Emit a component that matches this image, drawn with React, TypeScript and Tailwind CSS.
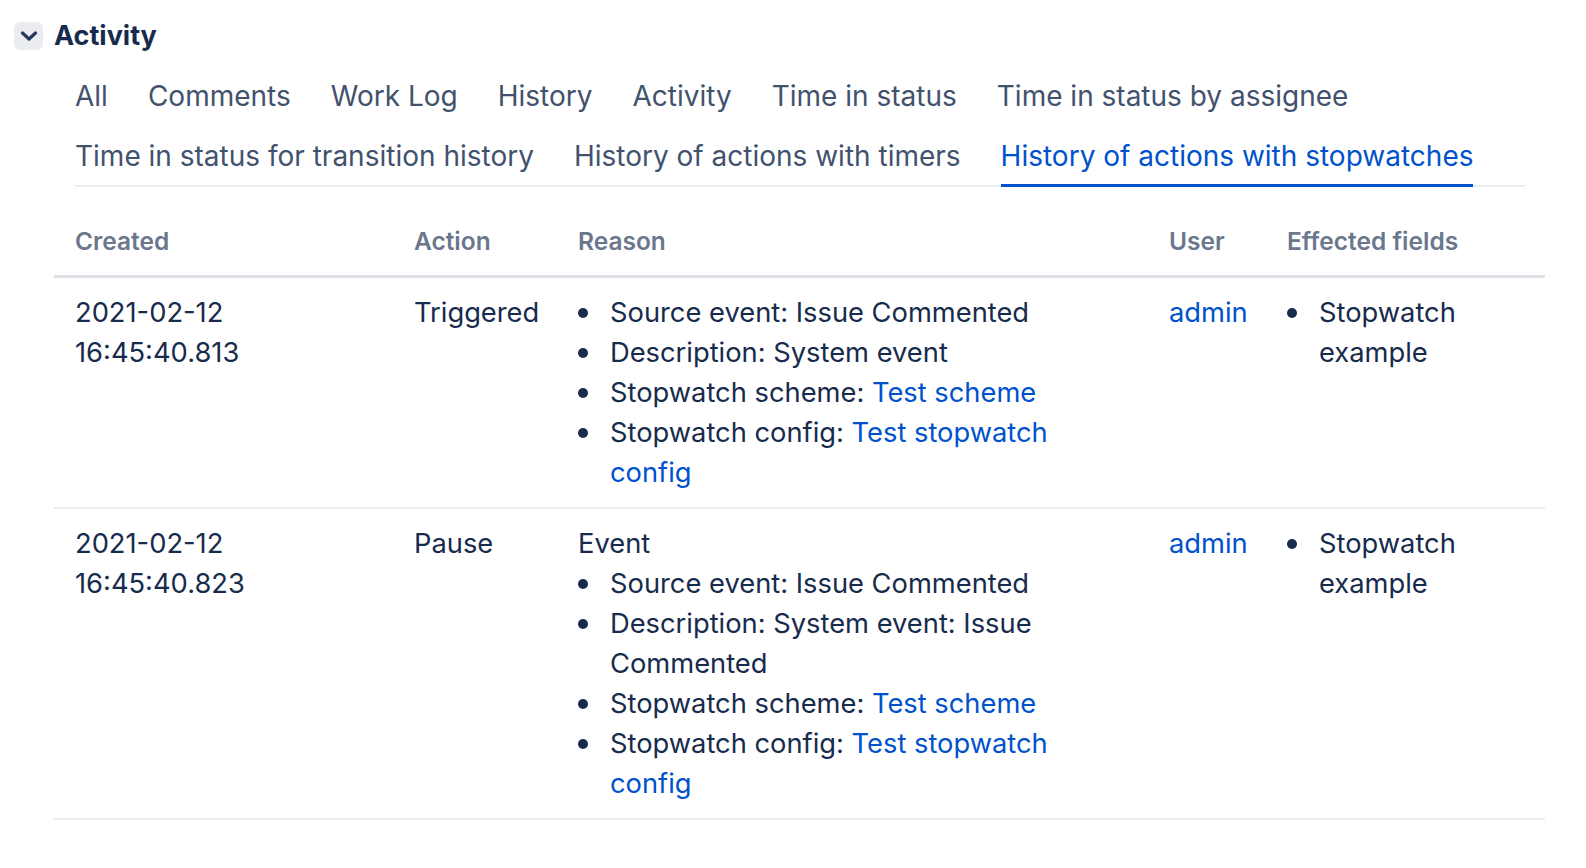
import { ReactNode } from "react"

const TABS = [
  "All",
  "Comments",
  "Work Log",
  "History",
  "Activity",
  "Time in status",
  "Time in status by assignee",
  "Time in status for transition history",
  "History of actions with timers",
  "History of actions with stopwatches",
]

const ACTIVE_TAB = "History of actions with stopwatches"

function Link({ children }: { children: ReactNode }) {
  return <span className="text-[#0052cc]">{children}</span>
}

function Bullets({ items }: { items: ReactNode[] }) {
  return (
    <ul>
      {items.map((item, i) => (
        <li key={i} className="flex">
          <span className="flex h-[40px] w-[32px] shrink-0 items-center">
            <span className="h-[10px] w-[10px] rounded-full bg-[#172b4d]" />
          </span>
          <span>{item}</span>
        </li>
      ))}
    </ul>
  )
}

function Chevron() {
  return (
    <svg width="20" height="20" viewBox="0 0 20 20" fill="none">
      <path
        d="M3.5 7l6.5 6 6.5-6"
        stroke="#253858"
        strokeWidth="3.2"
        strokeLinecap="round"
        strokeLinejoin="round"
      />
    </svg>
  )
}

const configLine = (
  <>
    Stopwatch config: <Link>Test stopwatch</Link> <Link>config</Link>
  </>
)

const schemeLine = (
  <>
    Stopwatch scheme: <Link>Test scheme</Link>
  </>
)

const ROWS = [
  {
    created: ["2021-02-12", "16:45:40.813"],
    action: "Triggered",
    lead: null as string | null,
    reason: ["Source event: Issue Commented", "Description: System event", schemeLine, configLine],
  },
  {
    created: ["2021-02-12", "16:45:40.823"],
    action: "Pause",
    lead: "Event",
    reason: [
      "Source event: Issue Commented",
      "Description: System event: Issue Commented",
      schemeLine,
      configLine,
    ],
  },
]

export default function App() {
  return (
    <div
      className="h-[868px] w-[1586px] overflow-hidden bg-white text-[#172b4d]"
      style={{ fontFamily: "Inter, 'Noto Sans', sans-serif" }}
    >
      <div className="flex items-center pl-[14px] pt-[22px]">
        <button className="flex h-[28px] w-[29px] items-center justify-center rounded-[6px] bg-[#ebecf0]">
          <Chevron />
        </button>
        <h2 className="ml-[11px] text-[27px] font-bold leading-[28px] text-[#172b4d]">Activity</h2>
      </div>

      <div className="ml-[75px] mr-[61px] mt-[15px] flex flex-wrap gap-x-[40px] border-b-2 border-[#ebecf0]">
        {TABS.map((tab) => (
          <div
            key={tab}
            className={
              tab === ACTIVE_TAB
                ? "-mb-[2px] border-b-[3px] border-[#0052cc] pb-[11px] pt-[14px] text-[28px] leading-[34px] text-[#0052cc]"
                : "-mb-[2px] border-b-[3px] border-transparent pb-[11px] pt-[14px] text-[28px] leading-[34px] text-[#42526e]"
            }
          >
            {tab}
          </div>
        ))}
      </div>

      <table className="ml-[54px] w-[1491px] table-fixed border-collapse text-[27.3px] leading-[40px]">
        <colgroup>
          <col className="w-[340px]" />
          <col className="w-[164px]" />
          <col className="w-[591px]" />
          <col className="w-[118px]" />
          <col className="w-[278px]" />
        </colgroup>
        <thead>
          <tr className="border-b-[3px] border-[#dfe1e6] text-left text-[24.5px] text-[#6b778c]">
            <th className="pb-[14px] pl-[21px] pt-[34px] font-semibold">Created</th>
            <th className="pb-[14px] pl-[20px] pt-[34px] font-semibold">Action</th>
            <th className="pb-[14px] pl-[20px] pt-[34px] font-semibold">Reason</th>
            <th className="pb-[14px] pl-[20px] pt-[34px] font-semibold">User</th>
            <th className="pb-[14px] pl-[20px] pt-[34px] font-semibold">Effected fields</th>
          </tr>
        </thead>
        <tbody>
          {ROWS.map((row, i) => (
            <tr key={i} className="border-b-2 border-[#ebecf0] align-top">
              <td className="pb-[14px] pl-[21px] pt-[15px]">
                {row.created.map((line) => (
                  <div key={line}>{line}</div>
                ))}
              </td>
              <td className="pb-[14px] pl-[20px] pt-[15px]">{row.action}</td>
              <td className="pb-[14px] pl-[20px] pr-[20px] pt-[15px]">
                {row.lead && <div>{row.lead}</div>}
                <Bullets items={row.reason} />
              </td>
              <td className="pb-[14px] pl-[20px] pt-[15px]">
                <Link>admin</Link>
              </td>
              <td className="pb-[14px] pl-[20px] pr-[20px] pt-[15px]">
                <Bullets items={["Stopwatch example"]} />
              </td>
            </tr>
          ))}
        </tbody>
      </table>
    </div>
  )
}
